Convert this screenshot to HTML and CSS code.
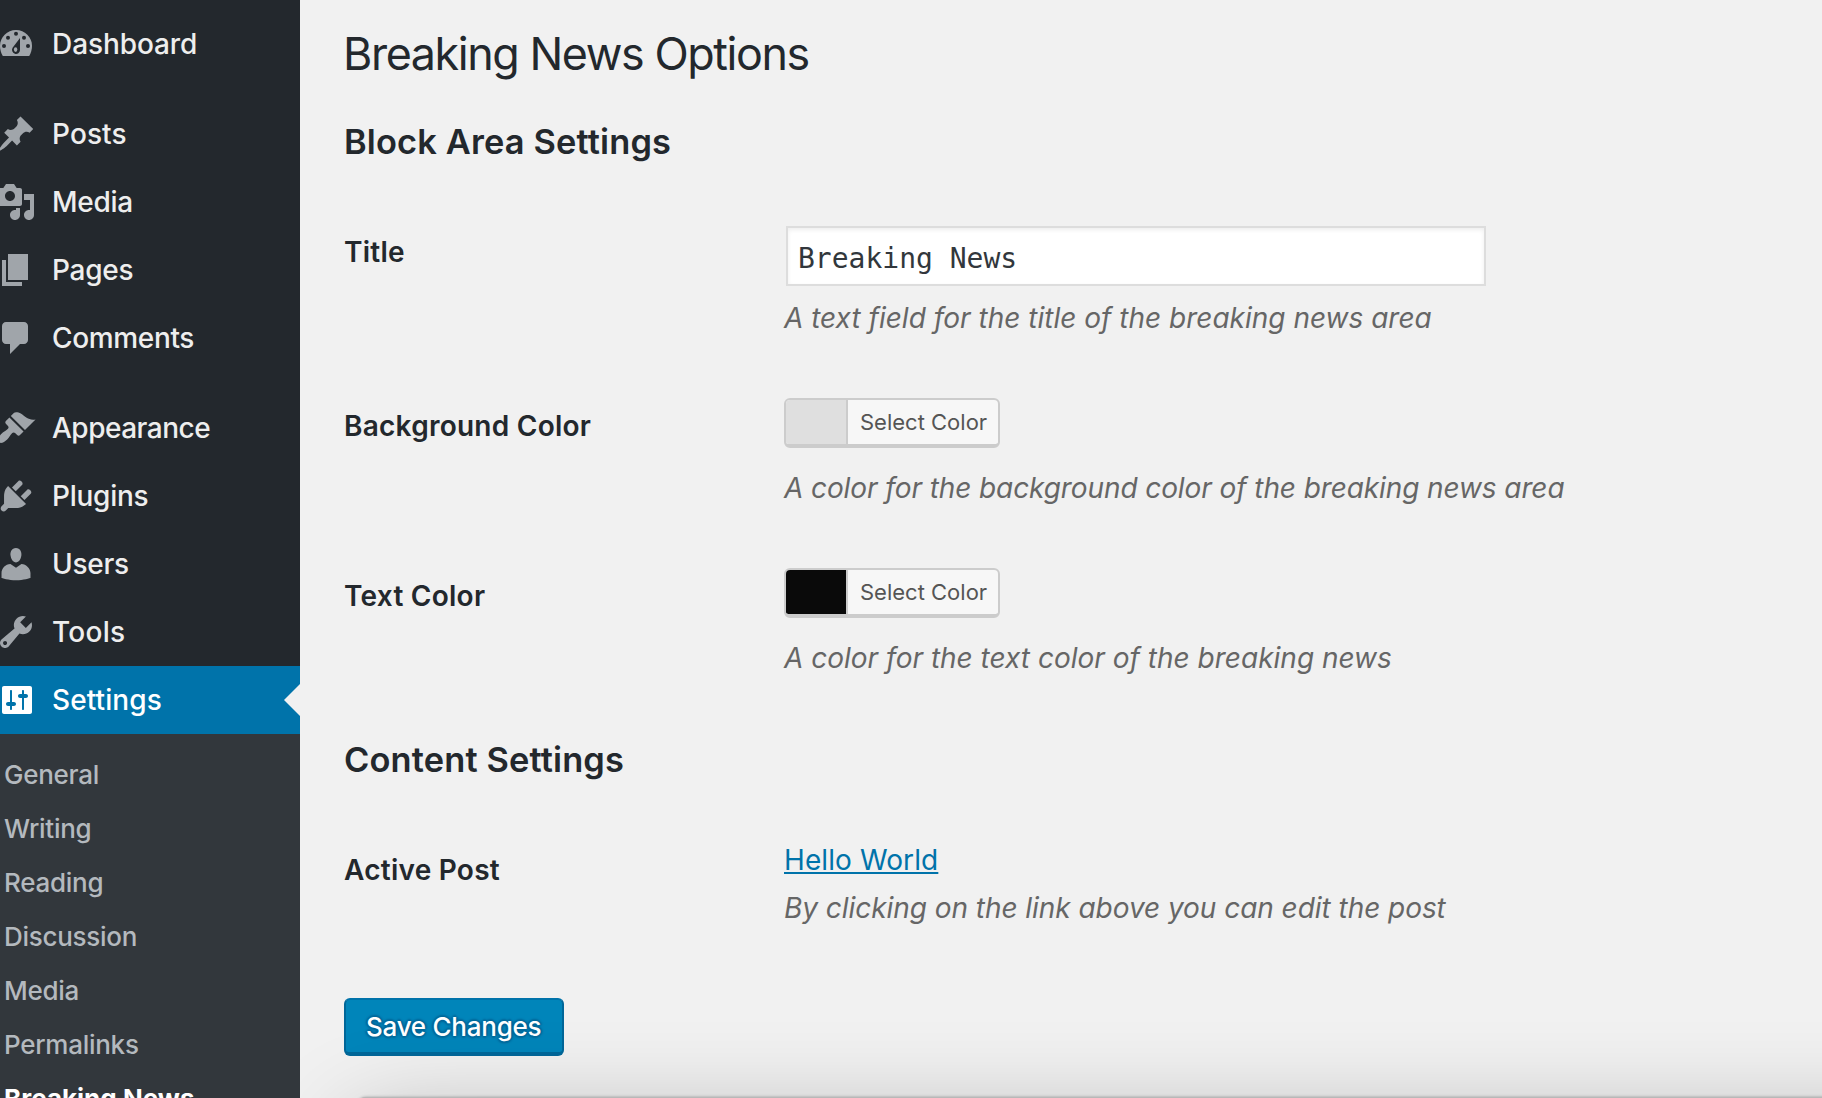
FILE: index.html
```html
<!DOCTYPE html>
<html lang="en">
<head>
<meta charset="utf-8">
<title>Breaking News Options</title>
<link rel="stylesheet" href="styles.css">
</head>
<body>
<div class="admin">
  <nav class="sidebar">
    <ul class="menu">
      <li class="item item-dashboard"><svg class="icon" viewBox="0 0 20 20"><path d="M3.4 16h13.2c.9-1.4 1.4-3.18 1.4-5.12C18 6.55 14.42 3 10 3s-8 3.55-8 7.88c0 1.94.5 3.72 1.4 5.12z"/><g class="icon-cut"><circle cx="10" cy="4.9" r="1"/><circle cx="6" cy="6.9" r="1"/><circle cx="14" cy="6.9" r="1"/><circle cx="4" cy="11" r="1"/><circle cx="16" cy="11" r="1"/><path d="M12 7v6a2 2 0 1 1-3.7-1.1z"/></g><ellipse cx="9.8" cy="12.8" rx=".85" ry="1.15"/></svg><span>Dashboard</span></li>
      <li class="separator"></li>
      <li class="item item-posts"><svg class="icon" viewBox="0 0 20 20"><path d="M10.44 3.02l1.82-1.82 6.36 6.35-1.83 1.82c-1.05-.68-2.48-.57-3.41.36l-.75.75c-.92.93-1.04 2.35-.35 3.41l-1.83 1.82-2.41-2.41-2.8 2.79c-.42.42-3.38 2.71-3.8 2.29s1.86-3.39 2.28-3.81l2.79-2.79L4.1 9.36l1.83-1.82c1.05.69 2.48.57 3.4-.36l.75-.75c.93-.92 1.05-2.35.36-3.41z"/></svg><span>Posts</span></li>
      <li class="item"><svg class="icon" viewBox="0 0 20 20"><path fill-rule="evenodd" d="M13 11V4c0-.55-.45-1-1-1h-1.67L9 1H5L3.67 3H2c-.55 0-1 .45-1 1v7c0 .55.45 1 1 1h10c.55 0 1-.45 1-1zM7 4.5c1.38 0 2.5 1.12 2.5 2.5S8.38 9.5 7 9.5 4.5 8.38 4.5 7 5.62 4.5 7 4.5zM14 6h5v10.5c0 1.38-1.12 2.5-2.5 2.5S14 17.88 14 16.5s1.12-2.5 2.5-2.5c.17 0 .34.02.5.05V9h-3V6zm-4 8.05V13h2v3.5c0 1.38-1.12 2.5-2.5 2.5S7 17.88 7 16.5 8.12 14 9.5 14c.17 0 .34.02.5.05z"/></svg><span>Media</span></li>
      <li class="item"><svg class="icon" viewBox="0 0 20 20"><path d="M6 15V2h10v13H6zm-1 1h8v2H3V5h2v11z"/></svg><span>Pages</span></li>
      <li class="item item-comments"><svg class="icon" viewBox="0 0 20 20"><path d="M5 2h9c1.1 0 2 .9 2 2v7c0 1.1-.9 2-2 2h-2l-5 5v-5H5c-1.1 0-2-.9-2-2V4c0-1.1.9-2 2-2z"/></svg><span>Comments</span></li>
      <li class="separator"></li>
      <li class="item item-appearance"><svg class="icon" viewBox="0 0 20 20"><path d="M14.48 11.06L7.41 3.99l1.5-1.5c.5-.56 2.3-.47 3.51.32 1.21.8 1.43 1.28 2.91 2.1 1.18.64 2.45 1.26 4.45.85zm-.71.71L6.7 4.7 4.93 6.47c-.39.39-.39 1.02 0 1.41l1.06 1.06c.39.39.39 1.03 0 1.42-.6.6-1.43 1.11-2.21 1.69-.35.26-.7.53-1.01.84C1.43 14.23.4 16.08 1.4 17.07c.99 1 2.84-.03 4.18-1.36.31-.31.58-.66.85-1.02.57-.78 1.08-1.61 1.69-2.21.39-.39 1.02-.39 1.41 0l1.06 1.06c.39.39 1.02.39 1.41 0z"/></svg><span>Appearance</span></li>
      <li class="item"><svg class="icon" viewBox="0 0 20 20"><path d="M13.11 4.36L9.87 7.6 8 5.73l3.24-3.24c.35-.34 1.05-.2 1.56.32.52.51.66 1.21.31 1.55zm-8 1.77l.91-1.12 9.01 9.01-1.19.84c-.71.71-2.63 1.16-3.82 1.16H6.14L4.9 17.26c-.59.59-1.54.59-2.12 0-.59-.58-.59-1.53 0-2.12l1.24-1.24v-3.88c0-1.13.4-3.19 1.09-3.89zm7.26 3.97l3.24-3.24c.34-.35 1.04-.21 1.55.31.52.51.66 1.21.31 1.55l-3.24 3.25z"/></svg><span>Plugins</span></li>
      <li class="item"><svg class="icon" viewBox="0 0 20 20"><path d="M10 9.25c-2.27 0-2.73-3.44-2.73-3.44C7 4.02 7.82 2 9.97 2c2.16 0 2.98 2.02 2.71 3.81 0 0-.41 3.44-2.68 3.44zm0 2.57L12.72 10c2.39 0 4.52 2.33 4.52 4.53v2.49s-3.65 1.13-7.24 1.13c-3.65 0-7.24-1.13-7.24-1.13v-2.49c0-2.25 1.94-4.48 4.47-4.48z"/></svg><span>Users</span></li>
      <li class="item item-tools"><svg class="icon" viewBox="0 0 20 20"><path fill-rule="evenodd" d="M16.68 9.77c-1.34 1.34-3.3 1.67-4.95.99l-5.41 6.52c-.99.99-2.59.99-3.58 0s-.99-2.59 0-3.57l6.52-5.42c-.68-1.65-.35-3.61.99-4.95 1.28-1.28 3.12-1.62 4.72-1.06l-2.89 2.89 2.82 2.82 2.86-2.87c.53 1.58.18 3.39-1.08 4.65zM3.81 16.21c.4.39 1.04.39 1.43 0 .4-.4.4-1.04 0-1.43-.39-.4-1.03-.4-1.43 0-.39.39-.39 1.03 0 1.43z"/></svg><span>Tools</span></li>
      <li class="item item-current"><svg class="icon" viewBox="0 0 20 20"><path fill-rule="evenodd" d="M18 16V4c0-.55-.45-1-1-1H4c-.55 0-1 .45-1 1v12c0 .55.45 1 1 1h13c.55 0 1-.45 1-1zM8 11h1c.55 0 1 .45 1 1s-.45 1-1 1H8v1.5c0 .28-.22.5-.5.5s-.5-.22-.5-.5V13H6c-.55 0-1-.45-1-1s.45-1 1-1h1V5.5c0-.28.22-.5.5-.5s.5.22.5.5V11zm5-2h-1c-.55 0-1-.45-1-1s.45-1 1-1h1V5.5c0-.28.22-.5.5-.5s.5.22.5.5V7h1c.55 0 1 .45 1 1s-.45 1-1 1h-1v5.5c0 .28-.22.5-.5.5s-.5-.22-.5-.5V9z"/></svg><span>Settings</span></li>
    </ul>
    <ul class="submenu">
      <li>General</li>
      <li>Writing</li>
      <li>Reading</li>
      <li>Discussion</li>
      <li>Media</li>
      <li>Permalinks</li>
      <li class="sub-current">Breaking News</li>
    </ul>
  </nav>
  <main class="content">
    <h1>Breaking News Options</h1>
    <h2>Block Area Settings</h2>
    <div class="form">
      <div class="label">Title</div>
      <div class="field">
        <input class="text-input" type="text" value="Breaking News">
        <p class="description desc-title">A text field for the title of the breaking news area</p>
      </div>
      <div class="label">Background Color</div>
      <div class="field">
        <button class="color-button"><span class="swatch swatch-gray"></span><span class="color-text">Select Color</span></button>
        <p class="description desc-background">A color for the background color of the breaking news area</p>
      </div>
      <div class="label">Text Color</div>
      <div class="field">
        <button class="color-button"><span class="swatch swatch-black"></span><span class="color-text">Select Color</span></button>
        <p class="description">A color for the text color of the breaking news</p>
      </div>
    </div>
    <h2 class="second">Content Settings</h2>
    <div class="form">
      <div class="label">Active Post</div>
      <div class="field">
        <a class="post-link" href="#">Hello World</a>
        <p class="description desc-link">By clicking on the link above you can edit the post</p>
      </div>
    </div>
    <button class="save">Save Changes</button>
    <div class="window-shadow"></div>
  </main>
</div>
</body>
</html>
```
FILE: styles.css
```css
* { box-sizing: border-box; }

body {
  margin: 0;
  background: #f1f1f1;
  color: #23282d;
  font-family: Inter, "Liberation Sans", sans-serif;
  overflow: hidden;
}

ul, h1, h2, p { margin: 0; padding: 0; }
ul { list-style: none; }
button { font-family: inherit; margin: 0; }

.admin {
  display: flex;
  height: 1098px;
  overflow: hidden;
}

/* Sidebar */
.sidebar {
  display: flex;
  flex-direction: column;
  flex: none;
  width: 300px;
  height: 1098px;
  padding-top: 10px;
  overflow: hidden;
  background: #23282d;
}

.menu { flex: none; }
.separator { height: 22px; }

.item {
  position: relative;
  display: flex;
  align-items: center;
  gap: 16px;
  height: 68px;
  color: #eee;
  font-size: 28px;
  font-weight: 500;
  line-height: 68px;
  letter-spacing: -.25px;
}

.item-dashboard { letter-spacing: -.08px; }
.item-posts { letter-spacing: .1px; }
.item-comments { letter-spacing: -.35px; }
.item-appearance { letter-spacing: -.5px; }
.item-tools { letter-spacing: .25px; }

.icon {
  flex: none;
  width: 40px;
  height: 40px;
  margin-left: -4px;
  fill: #a0a5aa;
}
.icon-cut { fill: #23282d; }

.item-current {
  background: #0073aa;
  color: #fff;
  letter-spacing: .1px;
}
.item-current .icon { fill: #fff; }
.item-current::after {
  content: "";
  position: absolute;
  top: 18px;
  right: 0;
  border: 16px solid transparent;
  border-left: 0;
  border-right-color: #f1f1f1;
}

.submenu {
  flex: 1;
  padding: 14px 0 0 4px;
  background: #32373c;
  color: #b4b9be;
  font-size: 26px;
  font-weight: 500;
  line-height: 54px;
  letter-spacing: -.27px;
}
.sub-current {
  color: #fff;
  font-weight: 700;
  letter-spacing: 0;
}

/* Settings page */
.content {
  position: relative;
  flex: 1;
  padding: 24px 0 0 44px;
  overflow: hidden;
}

h1 {
  margin-left: -1px;
  font-size: 44.8px;
  font-weight: 400;
  line-height: 60px;
  letter-spacing: -1.4px;
}

h2 {
  margin: 34px 0 38px;
  font-size: 34.4px;
  font-weight: 600;
  line-height: 48px;
  letter-spacing: .15px;
}
.second { margin-top: 18px; }

.form {
  display: grid;
  grid-template-columns: 440px 1fr;
}

.label {
  padding-top: 30px;
  font-size: 28px;
  font-weight: 600;
  line-height: 36px;
  letter-spacing: .25px;
}

.field {
  display: flex;
  flex-direction: column;
  align-items: flex-start;
  padding: 20px 0 42px;
}

.text-input {
  width: 700px;
  height: 60px;
  margin: 2px 0 0 2px;
  padding: 4px 10px 0;
  border: 2px solid #ddd;
  border-radius: 0;
  background: #fff;
  box-shadow: inset 0 2px 4px rgba(0, 0, 0, .07);
  color: #32373c;
  font: 28px "DejaVu Sans Mono", monospace;
}

.description {
  margin-top: 22px;
  color: #666;
  font-size: 28px;
  font-style: italic;
  line-height: 36px;
  white-space: nowrap;
}
.desc-title { margin-top: 14px; }
.desc-background { letter-spacing: -.1px; }
.desc-link { margin-top: 12px; letter-spacing: -.05px; }

.color-button {
  display: flex;
  width: 216px;
  height: 50px;
  padding: 0;
  overflow: hidden;
  border: 2px solid #ccc;
  border-bottom-width: 4px;
  border-radius: 6px;
  background: #f7f7f7;
  color: #555;
  font-size: 22px;
  line-height: 44px;
  white-space: nowrap;
}
.swatch {
  flex: none;
  width: 60px;
  height: 44px;
}
.swatch-gray { background: #dfdfdf; }
.swatch-black { background: #0a0a0a; }
.color-text {
  padding-left: 12px;
  border-left: 2px solid #ccc;
}

.post-link {
  color: #0073aa;
  font-size: 28px;
  line-height: 36px;
  letter-spacing: .1px;
  text-decoration: underline;
  text-decoration-thickness: 2px;
  text-underline-offset: 2px;
  text-decoration-skip-ink: none;
}

.save {
  display: block;
  width: 220px;
  height: 58px;
  margin-top: 30px;
  padding: 1px 0 0 20px;
  border: 2px solid #0073aa;
  border-color: #0073aa #006799 #006799;
  border-bottom-width: 4px;
  border-radius: 6px;
  background: #0085ba;
  color: #fff;
  font-size: 26px;
  font-weight: 500;
  line-height: 51px;
  letter-spacing: -.25px;
  text-align: left;
  text-shadow: 0 -2px 2px #006799, 2px 0 2px #006799, 0 2px 2px #006799, -2px 0 2px #006799;
}

/* Soft shadow of the panel that sits below the fold */
.window-shadow {
  position: absolute;
  top: 1097px;
  left: 56px;
  width: 1900px;
  height: 800px;
  border-radius: 10px;
  background: #b8b8b8;
  box-shadow: 0 0 3px rgba(0, 0, 0, .3), 0 30px 100px rgba(0, 0, 0, .3);
  pointer-events: none;
}
```
